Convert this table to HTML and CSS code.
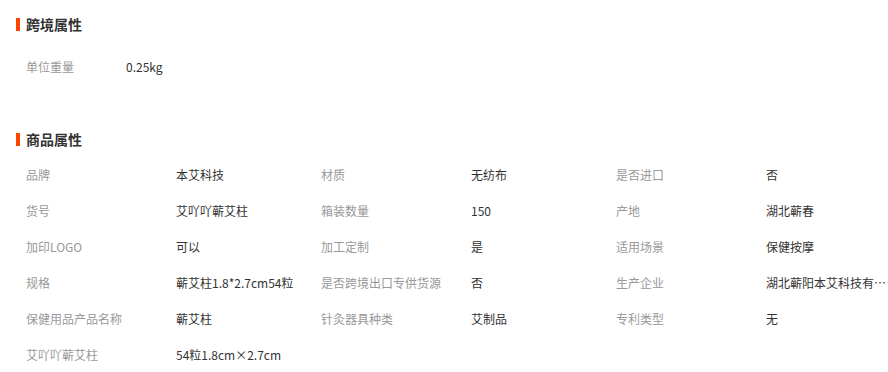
FILE: index.html
```html
<!DOCTYPE html>
<html lang="zh-CN">
<head>
<meta charset="utf-8">
<link rel="stylesheet" href="styles.css">
</head>
<body>
<section class="block block-cross">
  <h3 class="title">跨境属性</h3>
  <div class="simple-row">
    <span class="label short">单位重量</span>
    <span class="value">0.25kg</span>
  </div>
</section>
<section class="block">
  <h3 class="title">商品属性</h3>
  <div class="attr-grid">
    <div class="item"><span class="label">品牌</span><span class="value">本艾科技</span></div>
    <div class="item"><span class="label">材质</span><span class="value">无纺布</span></div>
    <div class="item"><span class="label">是否进口</span><span class="value">否</span></div>
    <div class="item"><span class="label">货号</span><span class="value">艾吖吖蕲艾柱</span></div>
    <div class="item"><span class="label">箱装数量</span><span class="value">150</span></div>
    <div class="item"><span class="label">产地</span><span class="value">湖北蕲春</span></div>
    <div class="item"><span class="label">加印LOGO</span><span class="value">可以</span></div>
    <div class="item"><span class="label">加工定制</span><span class="value">是</span></div>
    <div class="item"><span class="label">适用场景</span><span class="value">保健按摩</span></div>
    <div class="item"><span class="label">规格</span><span class="value">蕲艾柱1.8*2.7cm54粒</span></div>
    <div class="item"><span class="label">是否跨境出口专供货源</span><span class="value">否</span></div>
    <div class="item"><span class="label">生产企业</span><span class="value">湖北蕲阳本艾科技有限公司</span></div>
    <div class="item"><span class="label">保健用品产品名称</span><span class="value">蕲艾柱</span></div>
    <div class="item"><span class="label">针灸器具种类</span><span class="value">艾制品</span></div>
    <div class="item"><span class="label">专利类型</span><span class="value">无</span></div>
    <div class="item"><span class="label">艾吖吖蕲艾柱</span><span class="value">54粒1.8cm×2.7cm</span></div>
  </div>
</section>
</body>
</html>
```

FILE: styles.css
```css
* { box-sizing: border-box; }
html, body { margin: 0; padding: 0; background: #fff; }
body {
  font-family: "Noto Sans CJK SC", "Liberation Sans", sans-serif;
  font-size: 12px;
  color: #333;
  padding: 0 0 0 16px;
  overflow: hidden;
}
.block { margin: 0; }
.block-cross { height: 129px; padding-top: 14px; }
.title {
  display: flex;
  align-items: center;
  margin: 0;
  height: 20px;
  font-size: 14px;
  font-weight: bold;
  color: #333;
  line-height: 20px;
}
.title::before {
  content: "";
  display: block;
  width: 4px;
  height: 13px;
  background: #ff4400;
  margin-right: 6px;
}
.simple-row {
  display: flex;
  align-items: center;
  height: 20px;
  margin-top: 22px;
  padding-left: 10px;
}
.label { color: #999; width: 150px; flex: none; white-space: nowrap; }
.label.short { width: 100px; }
.value { color: #333; white-space: nowrap; }
.attr-grid {
  display: grid;
  grid-template-columns: 295px 295px 295px;
  padding-left: 10px;
  margin-top: 7px;
}
.item {
  display: flex;
  align-items: center;
  height: 36px;
}
.item .value {
  max-width: 121px;
  overflow: hidden;
  text-overflow: ellipsis;
}
```
